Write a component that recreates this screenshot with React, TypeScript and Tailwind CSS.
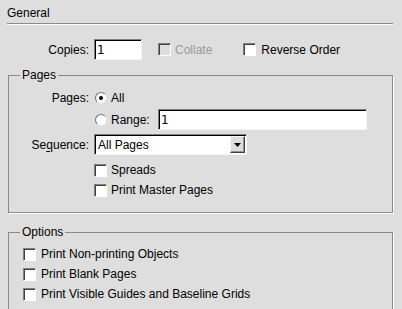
import React from "react";

function Checkbox({ disabled }: { disabled?: boolean }) {
  return (
    <span
      className={
        "block w-[13px] h-[13px] shrink-0 border border-t-[#808080] border-l-[#808080] border-r-white border-b-white shadow-[inset_1px_1px_0_#404040] " +
        (disabled ? "bg-[#dedede]" : "bg-white")
      }
    />
  );
}

function Radio({ checked }: { checked?: boolean }) {
  return (
    <span className="relative flex items-center justify-center w-[12px] h-[12px] shrink-0 rounded-full bg-white border border-t-[#707070] border-l-[#707070] border-r-[#e8e8e8] border-b-[#e8e8e8]">
      {checked && <span className="block w-[4px] h-[4px] rounded-full bg-black" />}
    </span>
  );
}

function TextBox({ w, value }: { w: string; value: string }) {
  return (
    <div
      className={
        w +
        " h-[21px] shrink-0 bg-white border border-t-[#808080] border-l-[#808080] border-r-[#f4f4f4] border-b-[#f4f4f4] shadow-[inset_1px_1px_0_#000] flex items-center pl-[2px] font-['DejaVu_Sans',sans-serif] text-[12px]"
      }
    >
      {value}
    </div>
  );
}

export default function App() {
  return (
    <div className="w-[402px] h-[309px] overflow-hidden bg-[#dedede] text-black text-[12px] leading-[14px] font-['Liberation_Sans',Arial,sans-serif]">
      <div className="pl-[7px] pt-[6px]">General</div>
      <div className="ml-[7px] mt-[3px] w-[386px] border-t border-[#8a8a8a] shadow-[0_1px_0_#fff]" />

      {/* Copies row */}
      <div className="mt-[15px] h-[21px] flex items-center">
        <span className="w-[89px] text-right">Copies:</span>
        <span className="ml-[5px]">
          <TextBox w="w-[48px]" value="1" />
        </span>
        <span className="ml-[16px]">
          <Checkbox disabled />
        </span>
        <span className="ml-[4px] text-[#9a9a9a]">Collate</span>
        <span className="ml-[31px]">
          <Checkbox />
        </span>
        <span className="ml-[5px]">Reverse Order</span>
      </div>

      {/* Pages group */}
      <fieldset className="ml-[8px] mt-[8px] w-[385px] border border-[#8a8a8a] shadow-[1px_1px_0_#fff] pb-[15px]">
        <legend className="ml-[11px] px-[2px] leading-[14px]">Pages</legend>
        <div className="mt-[9px] h-[14px] flex items-center">
          <span className="w-[80px] text-right">Pages:</span>
          <span className="ml-[6px]">
            <Radio checked />
          </span>
          <span className="ml-[4px]">All</span>
        </div>
        <div className="mt-[4px] h-[21px] flex items-center">
          <span className="w-[80px]" />
          <span className="ml-[6px]">
            <Radio />
          </span>
          <span className="ml-[4px] w-[47px]">Range:</span>
          <TextBox w="w-[209px]" value="1" />
        </div>
        <div className="mt-[4px] h-[21px] flex items-center">
          <span className="w-[80px] text-right">
            Se<span className="underline underline-offset-2">q</span>uence:
          </span>
          <div className="ml-[5px] w-[153px] h-[21px] bg-white border border-t-[#808080] border-l-[#808080] border-r-[#f4f4f4] border-b-[#f4f4f4] shadow-[inset_1px_1px_0_#000] flex items-center justify-between pl-[3px] pr-[1px]">
            <span>All Pages</span>
            <span className="w-[15px] h-[17px] bg-[#dedede] border border-t-[#f4f4f4] border-l-[#f4f4f4] border-r-[#404040] border-b-[#404040] shadow-[inset_-1px_-1px_0_#909090] flex items-center justify-center">
              <svg width="7" height="4" viewBox="0 0 7 4">
                <path d="M0 0h7L3.5 4z" fill="#000" />
              </svg>
            </span>
          </div>
        </div>
        <div className="mt-[8px] h-[14px] flex items-center">
          <span className="ml-[85px]">
            <Checkbox />
          </span>
          <span className="ml-[4px]">Spreads</span>
        </div>
        <div className="mt-[6px] h-[14px] flex items-center">
          <span className="ml-[85px]">
            <Checkbox />
          </span>
          <span className="ml-[4px]">Print Master Pages</span>
        </div>
      </fieldset>

      {/* Options group */}
      <fieldset className="ml-[8px] mt-[12px] w-[385px] border border-[#8a8a8a] shadow-[1px_1px_0_#fff] pb-[20px]">
        <legend className="ml-[11px] px-[2px] leading-[14px]">Options</legend>
        {["Print Non-printing Objects", "Print Blank Pages", "Print Visible Guides and Baseline Grids"].map(
          (t, i) => (
            <div key={t} className={(i === 0 ? "mt-[8px]" : "mt-[6px]") + " h-[14px] flex items-center"}>
              <span className="ml-[14px]">
                <Checkbox />
              </span>
              <span className="ml-[5px]">{t}</span>
            </div>
          )
        )}
      </fieldset>
    </div>
  );
}
